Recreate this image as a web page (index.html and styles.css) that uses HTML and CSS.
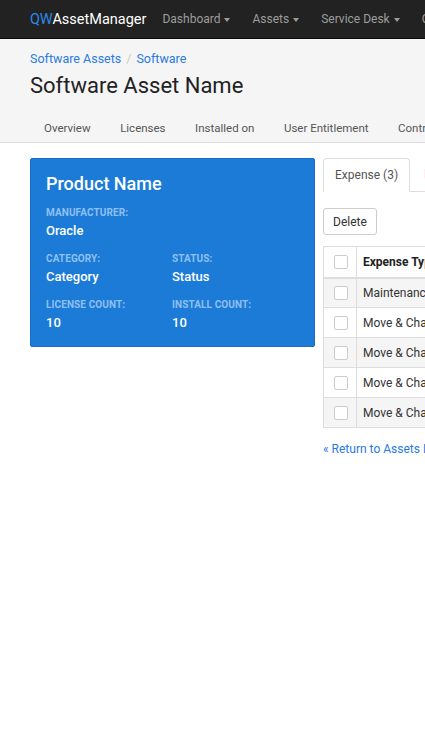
FILE: index.html
```html
<!DOCTYPE html>
<html>
<head>
<meta charset="utf-8">
<link rel="stylesheet" href="styles.css">
</head>
<body>
<div class="page">
  <nav class="navbar">
    <a class="brand"><span class="qw">QW</span>AssetManager</a>
    <ul class="nav">
      <li>Dashboard <span class="caret"></span></li>
      <li>Assets <span class="caret"></span></li>
      <li>Service Desk <span class="caret"></span></li>
      <li>Contracts <span class="caret"></span></li>
    </ul>
  </nav>
  <header class="head">
    <div class="crumbs"><a>Software Assets</a><span class="sep">/</span><a>Software</a></div>
    <h1 class="title">Software Asset Name</h1>
    <ul class="subnav">
      <li>Overview</li>
      <li>Licenses</li>
      <li>Installed on</li>
      <li>User Entitlement</li>
      <li>Contracts</li>
    </ul>
  </header>
  <main class="main">
    <section class="card">
      <h2 class="card-title">Product Name</h2>
      <div class="fields">
        <div class="field full"><div class="label">Manufacturer:</div><div class="value">Oracle</div></div>
        <div class="field"><div class="label">Category:</div><div class="value">Category</div></div>
        <div class="field"><div class="label">Status:</div><div class="value">Status</div></div>
        <div class="field"><div class="label">License Count:</div><div class="value">10</div></div>
        <div class="field"><div class="label">Install Count:</div><div class="value">10</div></div>
      </div>
    </section>
    <section class="right">
      <ul class="tabs">
        <li class="active">Expense (3)</li>
        <li>Documents</li>
      </ul>
      <button class="btn">Delete</button>
      <table class="table">
        <thead>
          <tr><th class="chk"><span class="box"></span></th><th>Expense Type</th><th>Description</th></tr>
        </thead>
        <tbody>
          <tr><td class="chk"><span class="box"></span></td><td>Maintenance</td><td>Annual</td></tr>
          <tr><td class="chk"><span class="box"></span></td><td>Move &amp; Change</td><td>Item</td></tr>
          <tr><td class="chk"><span class="box"></span></td><td>Move &amp; Change</td><td>Item</td></tr>
          <tr><td class="chk"><span class="box"></span></td><td>Move &amp; Change</td><td>Item</td></tr>
          <tr><td class="chk"><span class="box"></span></td><td>Move &amp; Change</td><td>Item</td></tr>
        </tbody>
      </table>
      <a class="back">« Return to Assets List</a>
    </section>
  </main>
</div>
</body>
</html>
```
FILE: styles.css
```css
html, body {
  margin: 0;
  padding: 0;
  overflow: hidden;
  background: #fff;
}
body {
  font-family: Roboto, "Liberation Sans", sans-serif;
  color: #333;
  width: 425px;
  height: 756px;
}
.page {
  width: 900px;
}
ul { list-style: none; margin: 0; padding: 0; }
a { color: #2a7ae2; text-decoration: none; }

.navbar {
  height: 38px;
  background: #222;
  border-bottom: 1px solid #0a0a0a;
  display: flex;
  align-items: center;
  padding-left: 30px;
}
.brand {
  color: #fff;
  font-size: 14.5px;
  font-weight: 400;
  margin-right: 16px;
}
.brand .qw { color: #2a8ae6; }
.nav {
  display: flex;
}
.nav li {
  color: #9d9d9d;
  font-size: 12px;
  margin-right: 22px;
}
.caret {
  display: inline-block;
  width: 0;
  height: 0;
  border-top: 4px solid #9d9d9d;
  border-left: 3.5px solid transparent;
  border-right: 3.5px solid transparent;
  vertical-align: middle;
  margin-left: 1px;
}

.head {
  background: #f5f5f5;
  border-bottom: 1px solid #ddd;
  padding: 13px 0 0 30px;
  box-sizing: border-box;
  height: 104px;
}
.crumbs {
  font-size: 12.5px;
  line-height: 14px;
}
.crumbs .sep { color: #ccc; margin: 0 5px; }
.title {
  margin: 6px 0 0;
  font-size: 22px;
  font-weight: 400;
  color: #222;
  line-height: 28px;
}
.subnav {
  display: flex;
  margin-top: 21px;
  padding-left: 14px;
}
.subnav li {
  font-size: 11.5px;
  color: #555;
  margin-right: 29.5px;
}

.main {
  display: flex;
  align-items: flex-start;
  padding: 15px 0 0 30px;
}
.card {
  width: 285px;
  box-sizing: border-box;
  background: #1b7bd7;
  border: 1px solid #1a6fc4;
  border-radius: 2px;
  padding: 14px 15px 14px;
  color: #fff;
}
.card-title {
  margin: 0 0 12px;
  font-size: 18px;
  font-weight: 500;
  line-height: 22px;
}
.fields {
  display: grid;
  grid-template-columns: 126px 1fr;
  row-gap: 13px;
}
.field.full { grid-column: 1 / 3; }
.label {
  font-size: 10px;
  font-weight: 700;
  text-transform: uppercase;
  color: #8fc0f2;
  letter-spacing: 0.1px;
  line-height: 12px;
}
.value {
  font-size: 13px;
  font-weight: 500;
  line-height: 18px;
  margin-top: 3px;
}

.right {
  margin-left: 8px;
  width: 500px;
}
.tabs {
  display: flex;
  border-bottom: 1px solid #ddd;
  height: 33px;
}
.tabs li {
  font-size: 12px;
  padding: 0 12px;
  line-height: 32px;
  color: #2a7ae2;
  margin-right: 2px;
}
.tabs li.active {
  color: #555;
  background: #fff;
  border: 1px solid #ddd;
  border-bottom-color: #fff;
  border-radius: 4px 4px 0 0;
  height: 34px;
  box-sizing: border-box;
  padding: 0 11px;
}
.btn {
  display: block;
  margin-top: 16px;
  font-family: inherit;
  font-size: 12px;
  color: #333;
  background: #fff;
  border: 1px solid #ccc;
  border-radius: 3px;
  height: 27px;
  padding: 0 9px;
}
.table {
  margin-top: 11px;
  border-collapse: collapse;
  font-size: 12px;
  width: 450px;
}
.table tr { height: 30px; }
.table thead tr { height: 31px; }
.table th, .table td {
  border: 1px solid #ddd;
  padding: 0 6px;
  text-align: left;
  white-space: nowrap;
}
.table th { font-weight: 700; color: #222; border-bottom-width: 2px; }
.table td { color: #333; }
.table tbody tr:nth-child(odd) { background: #f5f5f5; }
.table .chk { width: 22px; padding: 0 0 0 10px; }
.box {
  display: block;
  width: 12px;
  height: 12px;
  border: 1px solid #ccc;
  border-radius: 2px;
  background: #fff;
}
.back {
  display: block;
  margin-top: 14px;
  font-size: 12px;
}
```
